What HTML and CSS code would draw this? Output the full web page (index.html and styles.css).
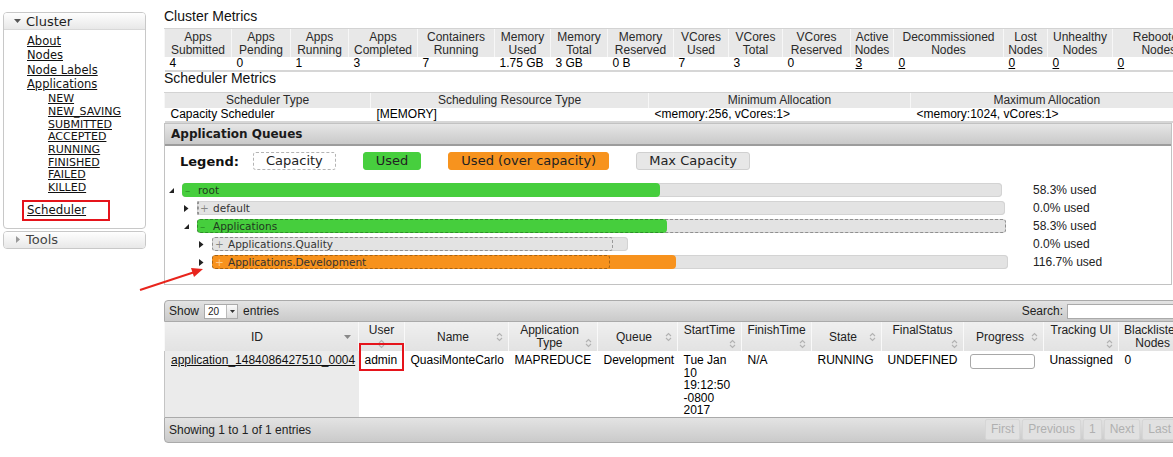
FILE: index.html
```html
<!DOCTYPE html>
<html lang="en">
<head>
<meta charset="utf-8">
<title>Scheduler</title>
<link rel="stylesheet" href="styles.css">
</head>
<body>
<div class="page">
  <aside class="sidebar">
    <div class="nav-box open">
      <div class="nav-head"><svg class="nav-tri" width="7" height="4" viewBox="0 0 7 4"><polygon points="0,0 7,0 3.5,4"/></svg>Cluster</div>
      <ul class="nav-links">
        <li><a href="#">About</a></li>
        <li><a href="#">Nodes</a></li>
        <li><a href="#">Node Labels</a></li>
        <li><a href="#">Applications</a></li>
      </ul>
      <ul class="nav-sub">
        <li><a href="#">NEW</a></li>
        <li><a href="#">NEW_SAVING</a></li>
        <li><a href="#">SUBMITTED</a></li>
        <li><a href="#">ACCEPTED</a></li>
        <li><a href="#">RUNNING</a></li>
        <li><a href="#">FINISHED</a></li>
        <li><a href="#">FAILED</a></li>
        <li><a href="#">KILLED</a></li>
      </ul>
      <div class="nav-mark"><a href="#">Scheduler</a></div>
    </div>
    <div class="nav-box">
      <div class="nav-head muted"><svg class="nav-tri closed" width="4" height="7" viewBox="0 0 4 7"><polygon points="0,0 4,3.5 0,7"/></svg>Tools</div>
    </div>
  </aside>

  <main class="main">
    <h3 class="title">Cluster Metrics</h3>
    <table class="metrics wide">
      <colgroup>
        <col style="width:67px"><col style="width:59px"><col style="width:58px"><col style="width:69px"><col style="width:77px"><col style="width:56px"><col style="width:57px"><col style="width:66px"><col style="width:55px"><col style="width:54px"><col style="width:68px"><col style="width:43px"><col style="width:110px"><col style="width:44px"><col style="width:65px"><col style="width:92px">
      </colgroup>
      <thead>
        <tr>
          <th>Apps Submitted</th><th>Apps Pending</th><th>Apps Running</th><th>Apps Completed</th><th>Containers Running</th><th>Memory Used</th><th>Memory Total</th><th>Memory Reserved</th><th>VCores Used</th><th>VCores Total</th><th>VCores Reserved</th><th>Active Nodes</th><th>Decommissioned Nodes</th><th>Lost Nodes</th><th>Unhealthy Nodes</th><th>Rebooted Nodes</th>
        </tr>
      </thead>
      <tbody>
        <tr>
          <td>4</td><td>0</td><td>1</td><td>3</td><td>7</td><td>1.75 GB</td><td>3 GB</td><td>0 B</td><td>7</td><td>3</td><td>0</td><td><a href="#">3</a></td><td><a href="#">0</a></td><td><a href="#">0</a></td><td><a href="#">0</a></td><td><a href="#">0</a></td>
        </tr>
      </tbody>
    </table>

    <h3 class="title second">Scheduler Metrics</h3>
    <table class="metrics sched">
      <colgroup>
        <col style="width:206px"><col style="width:278px"><col style="width:262px"><col style="width:272px">
      </colgroup>
      <thead>
        <tr><th>Scheduler Type</th><th>Scheduling Resource Type</th><th>Minimum Allocation</th><th>Maximum Allocation</th></tr>
      </thead>
      <tbody>
        <tr><td>Capacity Scheduler</td><td>[MEMORY]</td><td>&lt;memory:256, vCores:1&gt;</td><td>&lt;memory:1024, vCores:1&gt;</td></tr>
      </tbody>
    </table>

    <section class="queues">
      <div class="q-head">Application Queues</div>
      <div class="q-body">
        <div class="legend">
          <span class="lg-title">Legend:</span>
          <span class="lg-item lg-cap">Capacity</span>
          <span class="lg-item lg-used">Used</span>
          <span class="lg-item lg-over">Used (over capacity)</span>
          <span class="lg-item lg-max">Max Capacity</span>
        </div>
        <div class="tree">
          <div class="qrow">
            <div class="qtree lvl0">
              <svg class="tg" width="5" height="5" viewBox="0 0 5 5"><polygon points="5,0 5,5 0,5"/></svg>
              <div class="bar" style="width:820px">
                <span class="fill green" style="width:58.3%"></span>
                <span class="lbl on-green"><b class="sign">–</b>root</span>
              </div>
            </div>
            <span class="pct">58.3% used</span>
          </div>
          <div class="qrow">
            <div class="qtree lvl1">
              <svg class="tg" width="5" height="7" viewBox="0 0 5 7"><polygon points="0,0 4.5,3.5 0,7"/></svg>
              <div class="bar" style="width:808px">
                <span class="cap" style="width:0"></span>
                <span class="lbl"><b class="sign">+</b>default</span>
              </div>
            </div>
            <span class="pct">0.0% used</span>
          </div>
          <div class="qrow">
            <div class="qtree lvl1">
              <svg class="tg" width="5" height="5" viewBox="0 0 5 5"><polygon points="5,0 5,5 0,5"/></svg>
              <div class="bar" style="width:809px">
                <span class="fill green" style="width:58.1%"></span>
                <span class="cap" style="width:100%"></span>
                <span class="lbl on-green"><b class="sign">–</b>Applications</span>
              </div>
            </div>
            <span class="pct">58.3% used</span>
          </div>
          <div class="qrow">
            <div class="qtree lvl2">
              <svg class="tg" width="5" height="7" viewBox="0 0 5 7"><polygon points="0,0 4.5,3.5 0,7"/></svg>
              <div class="bar" style="width:416px">
                <span class="cap" style="width:96.4%"></span>
                <span class="lbl"><b class="sign">+</b>Applications.Quality</span>
              </div>
            </div>
            <span class="pct">0.0% used</span>
          </div>
          <div class="qrow">
            <div class="qtree lvl2">
              <svg class="tg" width="5" height="7" viewBox="0 0 5 7"><polygon points="0,0 4.5,3.5 0,7"/></svg>
              <div class="bar" style="width:796px">
                <span class="fill orange" style="width:58.3%"></span>
                <span class="cap" style="width:50%"></span>
                <span class="lbl"><b class="sign light">+</b>Applications.Development</span>
              </div>
            </div>
            <span class="pct">116.7% used</span>
          </div>
        </div>
      </div>
    </section>

    <div class="dt">
      <div class="dt-toolbar">
        <div class="dt-length">Show <span class="sel"><span class="sel-val">20</span><span class="sel-btn"><svg width="5" height="3" viewBox="0 0 5 3"><polygon points="0,0 5,0 2.5,3"/></svg></span></span> entries</div>
        <div class="dt-search">Search: <span class="search-box"></span></div>
      </div>
      <table class="apps">
        <colgroup>
          <col style="width:194px"><col style="width:46px"><col style="width:104px"><col style="width:89px"><col style="width:80px"><col style="width:64px"><col style="width:70px"><col style="width:70px"><col style="width:82px"><col style="width:80px"><col style="width:75px"><col style="width:66px">
        </colgroup>
        <thead>
          <tr>
            <th><div class="hc row"><span class="hl">ID</span><svg class="sdesc" width="7" height="4" viewBox="0 0 7 4"><polygon points="0,0 7,0 3.5,4"/></svg></div></th>
            <th><div class="hc stack center"><span class="hl">User</span><svg class="srt" width="7" height="10" viewBox="0 0 7 10"><path d="M1 4 L3.5 1.5 L6 4 M1 6 L3.5 8.5 L6 6"/></svg></div></th>
            <th><div class="hc row"><span class="hl">Name</span><svg class="srt" width="7" height="10" viewBox="0 0 7 10"><path d="M1 4 L3.5 1.5 L6 4 M1 6 L3.5 8.5 L6 6"/></svg></div></th>
            <th><div class="hc wrap"><span class="hl">Application<br>Type</span><svg class="srt" width="7" height="10" viewBox="0 0 7 10"><path d="M1 4 L3.5 1.5 L6 4 M1 6 L3.5 8.5 L6 6"/></svg></div></th>
            <th><div class="hc row"><span class="hl">Queue</span><svg class="srt" width="7" height="10" viewBox="0 0 7 10"><path d="M1 4 L3.5 1.5 L6 4 M1 6 L3.5 8.5 L6 6"/></svg></div></th>
            <th><div class="hc stack"><span class="hl">StartTime</span><svg class="srt" width="7" height="10" viewBox="0 0 7 10"><path d="M1 4 L3.5 1.5 L6 4 M1 6 L3.5 8.5 L6 6"/></svg></div></th>
            <th><div class="hc stack"><span class="hl">FinishTime</span><svg class="srt" width="7" height="10" viewBox="0 0 7 10"><path d="M1 4 L3.5 1.5 L6 4 M1 6 L3.5 8.5 L6 6"/></svg></div></th>
            <th><div class="hc row"><span class="hl">State</span><svg class="srt" width="7" height="10" viewBox="0 0 7 10"><path d="M1 4 L3.5 1.5 L6 4 M1 6 L3.5 8.5 L6 6"/></svg></div></th>
            <th><div class="hc stack"><span class="hl">FinalStatus</span><svg class="srt" width="7" height="10" viewBox="0 0 7 10"><path d="M1 4 L3.5 1.5 L6 4 M1 6 L3.5 8.5 L6 6"/></svg></div></th>
            <th><div class="hc row"><span class="hl">Progress</span><svg class="srt" width="7" height="10" viewBox="0 0 7 10"><path d="M1 4 L3.5 1.5 L6 4 M1 6 L3.5 8.5 L6 6"/></svg></div></th>
            <th><div class="hc stack"><span class="hl">Tracking UI</span><svg class="srt" width="7" height="10" viewBox="0 0 7 10"><path d="M1 4 L3.5 1.5 L6 4 M1 6 L3.5 8.5 L6 6"/></svg></div></th>
            <th><div class="hc wrap"><span class="hl">Blacklisted<br>Nodes</span><svg class="srt" width="7" height="10" viewBox="0 0 7 10"><path d="M1 4 L3.5 1.5 L6 4 M1 6 L3.5 8.5 L6 6"/></svg></div></th>
          </tr>
        </thead>
        <tbody>
          <tr>
            <td class="sorted"><a href="#">application_1484086427510_0004</a></td>
            <td>admin</td>
            <td>QuasiMonteCarlo</td>
            <td>MAPREDUCE</td>
            <td class="tight">Development</td>
            <td class="wrap">Tue Jan 10 19:12:50 -0800 2017</td>
            <td>N/A</td>
            <td>RUNNING</td>
            <td>UNDEFINED</td>
            <td><span class="progress"></span></td>
            <td>Unassigned</td>
            <td>0</td>
          </tr>
        </tbody>
      </table>
      <div class="dt-footer">
        <div class="dt-info">Showing 1 to 1 of 1 entries</div>
        <div class="pager"><span>First</span><span>Previous</span><span>1</span><span>Next</span><span>Last</span></div>
      </div>
      <div class="mark-admin"></div>
    </div>
  </main>

  <svg class="arrow" width="76" height="34" viewBox="0 0 76 34">
    <line x1="6" y1="28" x2="60" y2="10.2" stroke="#e8251d" stroke-width="2"/>
    <polygon points="69,7 60,15 57,6" fill="#e8251d"/>
  </svg>
</div>
</body>
</html>
```

FILE: styles.css
```css
* { box-sizing: border-box; }

html, body {
  margin: 0;
  padding: 0;
  background: #fff;
}

body {
  width: 1173px;
  height: 457px;
  overflow: hidden;
  font-family: "Liberation Sans", Arial, sans-serif;
  color: #000;
}

a { color: #111; text-decoration: underline; }

.page {
  position: relative;
  display: flex;
  align-items: flex-start;
  width: 1173px;
  height: 457px;
  overflow: hidden;
}

/* ---------- sidebar ---------- */
.sidebar {
  flex: none;
  width: 143px;
  margin: 12px 0 0 3px;
  font-family: "DejaVu Sans", Verdana, sans-serif;
}

.nav-box {
  border: 1px solid #c8c8c8;
  border-radius: 4px;
  background: #fff;
}

.nav-box + .nav-box { margin-top: 2px; }

.nav-head {
  display: flex;
  align-items: center;
  height: 16px;
  padding-left: 10px;
  font-size: 13px;
  color: #1e1e1e;
  background: linear-gradient(#fefefe, #e8e8e8);
  border-radius: 3px;
}

.nav-box.open .nav-head {
  border-bottom: 1px solid #d8d8d8;
  border-radius: 3px 3px 0 0;
  height: 17px;
}

.nav-head.muted { color: #444; }

.nav-tri { fill: #555; margin-right: 5px; flex: none; }
.nav-tri.closed { fill: #999; margin-left: 2px; margin-right: 6px; }

.nav-links, .nav-sub {
  list-style: none;
  margin: 0;
  padding: 0;
}

.nav-links {
  padding: 4px 0 0 23px;
  font-size: 11.5px;
  line-height: 14.3px;
}

.nav-sub {
  margin-top: 2px;
  padding-left: 44px;
  font-size: 11px;
  line-height: 12.7px;
}

.nav-mark {
  width: 88px;
  height: 21px;
  margin: 5px 0 7px 18px;
  padding-left: 3px;
  border: 2px solid #e5141b;
  font-size: 11.8px;
  line-height: 17px;
}

/* ---------- main ---------- */
.main {
  flex: none;
  width: 1040px;
  margin-left: 18px;
  padding-top: 8px;
}

.title {
  margin: 0 0 4px;
  font-size: 14px;
  font-weight: normal;
  line-height: 16px;
  color: #111;
}

.title.second {
  margin: -1px 0 7px;
  line-height: 14px;
}

.metrics {
  width: 1018px;
  border-collapse: collapse;
  table-layout: fixed;
  font-size: 12px;
}

.metrics.wide { width: 1040px; }

.metrics th {
  background: #e8e8e8;
  border-top: 1px solid #d3d3d3;
  border-left: 1px solid #f7f7f7;
  font-weight: normal;
  color: #2a2a2a;
  line-height: 13px;
  padding: 2px 2px 0;
  text-align: center;
  vertical-align: middle;
}

.metrics td {
  line-height: 13px;
  padding: 0 5px;
  border-bottom: 2px solid #d6d6d6;
  white-space: nowrap;
  overflow: hidden;
}

.metrics td a { color: #000; }

.sched th { padding: 1px 2px; }
.sched td { padding: 0 6px; }

/* ---------- application queues ---------- */
.queues {
  width: 1008px;
  border: 1px solid #c2c2c2;
}

.q-head {
  height: 22px;
  padding-left: 6px;
  font-family: "DejaVu Sans", Verdana, sans-serif;
  font-size: 12px;
  font-weight: bold;
  line-height: 20px;
  color: #1a1a1a;
  background: linear-gradient(#e6e6e6, #c9c9c9);
  border-bottom: 2px solid #9c9c9c;
}

.q-body {
  padding: 6px 0 13px;
  font-family: "DejaVu Sans", Verdana, sans-serif;
}

.legend {
  display: flex;
  align-items: center;
  height: 18px;
  gap: 27px;
  padding-left: 15px;
  font-size: 13px;
  color: #222;
}

.lg-title {
  font-weight: bold;
  margin-right: -13px;
  color: #111;
}

.lg-item {
  height: 18px;
  padding: 0 12px;
  line-height: 16px;
  border: 1px solid transparent;
  border-radius: 3px;
  white-space: nowrap;
}

.lg-cap { border: 1px dashed #b4b4b4; background: #fff; }
.lg-used { background: #47cf3e; border-color: #47cf3e; }
.lg-over { background: #f7931e; border-color: #f7931e; }
.lg-max { background: #e7e7e7; border-color: #d0d0d0; }

.tree { margin-top: 11px; }

.qrow {
  display: grid;
  grid-template-columns: 868px auto;
  align-items: center;
  height: 18px;
}

.qtree {
  display: flex;
  align-items: center;
}

.lvl0 { padding-left: 4px; }
.lvl1 { padding-left: 19px; }
.lvl2 { padding-left: 34px; }

.tg {
  flex: none;
  fill: #222;
  margin-right: 8px;
}

.bar {
  flex: none;
  display: grid;
  height: 14px;
  border-radius: 4px;
  background: #e3e3e3;
  box-shadow: inset 0 0 0 1px #d3d3d3;
}

.bar > * { grid-area: 1 / 1; }

.fill {
  justify-self: start;
  height: 14px;
  border-radius: 4px;
}

.fill.green { background: #46ce3d; }
.fill.orange { background: #f7921d; }

.cap {
  justify-self: start;
  height: 14px;
  border: 1px dashed rgba(0, 0, 0, 0.32);
  border-radius: 3px;
}

.lbl {
  align-self: center;
  padding-left: 3px;
  font-size: 10.5px;
  line-height: 12px;
  color: #333;
  white-space: nowrap;
}

.lbl.on-green { color: #1f3a1d; }

.sign {
  display: inline-block;
  width: 13px;
  font-weight: normal;
  color: rgba(0, 0, 0, 0.42);
}

.on-green .sign { color: rgba(0, 60, 0, 0.45); }
.sign.light { color: #fcc98a; }

.pct {
  font-family: "Liberation Sans", Arial, sans-serif;
  font-size: 12px;
  color: #222;
  white-space: nowrap;
}

/* ---------- datatable ---------- */
.dt {
  position: relative;
  width: 1020px;
  margin-top: 15px;
  font-size: 12px;
}

.dt-toolbar, .dt-footer {
  display: flex;
  align-items: center;
  justify-content: space-between;
  border: 1px solid #aaa;
  background: linear-gradient(#e3e3e3, #cacaca);
  color: #222;
}

.dt-toolbar {
  height: 22px;
  padding: 0 4px 0 4px;
  border-radius: 4px 4px 0 0;
}

.dt-length {
  display: flex;
  align-items: center;
  gap: 5px;
}

.sel {
  display: inline-flex;
  width: 34px;
  height: 15px;
  border: 1px solid #aaa;
  background: #fff;
  font-size: 10px;
  line-height: 13px;
}

.sel-val { flex: 1; padding-left: 3px; }

.sel-btn {
  display: flex;
  align-items: center;
  justify-content: center;
  width: 11px;
  border-left: 1px solid #bbb;
  background: linear-gradient(#fafafa, #dcdcdc);
}

.sel-btn svg { fill: #333; }

.dt-search {
  display: flex;
  align-items: center;
  gap: 4px;
}

.search-box {
  display: inline-block;
  width: 112px;
  height: 15px;
  border: 1px solid #aaa;
  background: #fff;
}

.apps {
  width: 1020px;
  border-collapse: collapse;
  table-layout: fixed;
  border-left: 1px solid #c4c4c4;
}

.apps th {
  padding: 2px 5px 1px;
  background: linear-gradient(#efefef, #e2e2e2);
  border-left: 1px solid #f9f9f9;
  font-weight: normal;
  color: #222;
  line-height: 13px;
  vertical-align: top;
}

.hc {
  display: flex;
  height: 26px;
}

.hc.row { align-items: center; }

.hc .hl { text-align: center; white-space: nowrap; }

.hc.row .hl, .hc.wrap .hl { flex: 1; }

.hc.stack { flex-direction: column; }

.hc.stack .srt { align-self: flex-end; margin-top: 2px; }
.hc.stack.center .srt { align-self: center; }

.hc.wrap { align-items: flex-end; }
.hc.wrap .srt { margin-bottom: 2px; }

.srt {
  flex: none;
  fill: none;
  stroke: #b2b2b2;
  stroke-width: 1.1;
}

.sdesc { flex: none; fill: #888; margin-right: 2px; }

.apps td {
  padding: 3px 3px 0 6px;
  line-height: 12.5px;
  vertical-align: top;
  white-space: nowrap;
  color: #000;
  background: #fff;
}

.apps td.sorted { background: #ebebeb; padding-left: 6px; }
.apps td.sorted a { color: #111; }
.apps td.wrap { white-space: normal; }
.apps td.tight { padding-left: 6px; padding-right: 0; }

.progress {
  display: inline-block;
  width: 65px;
  height: 15px;
  border: 1px solid #a8a8a8;
  border-radius: 3px;
  background: #fff;
}

.dt-footer {
  height: 26px;
  padding: 0 6px 0 4px;
  border-radius: 0 0 4px 4px;
}

.pager {
  display: flex;
  gap: 2px;
}

.pager span {
  padding: 0 5px;
  line-height: 19px;
  color: #b0b0b0;
  background: #e1e1e1;
  border: 1px solid #d6d6d6;
  border-radius: 2px;
}

.mark-admin {
  position: absolute;
  left: 195px;
  top: 43px;
  width: 45px;
  height: 28px;
  border: 2px solid #e5141b;
}

.arrow {
  position: absolute;
  left: 134px;
  top: 262px;
}
```
